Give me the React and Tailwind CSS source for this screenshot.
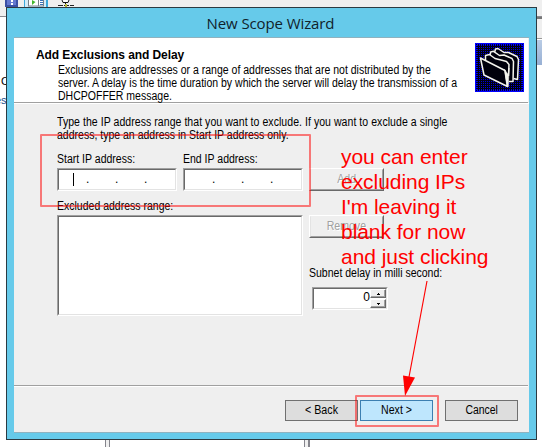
import React from "react";

function FolderIcon() {
  return (
    <svg width="49" height="49" viewBox="0 0 49 49" className="block shrink-0">
      <defs>
        <pattern id="dots" width="2" height="2" patternUnits="userSpaceOnUse">
          <rect width="2" height="2" fill="#000010" />
          <rect width="1" height="1" fill="#0000d8" />
        </pattern>
        <pattern id="edge" width="2" height="2" patternUnits="userSpaceOnUse">
          <rect width="2" height="2" fill="#0000ff" />
          <rect x="1" y="1" width="1" height="1" fill="#000030" />
        </pattern>
      </defs>
      <rect width="49" height="49" fill="url(#edge)" />
      <rect x="2" y="2" width="45" height="45" fill="url(#dots)" />
      <g fill="#00000c" stroke="#f4f4ee" strokeWidth="1.500" strokeLinejoin="round">
        <path d="M19.500 9.500 L20.500 6 L23 5.500 L29 9.500 L33.500 9.500 L42 13.500 L43.500 16.500 L42.500 36.500 L38.500 35.500" />
        <path d="M15 12.500 L15.700 9 L18.500 8.300 L24.500 12.500 L29 12 L37 15.500 L38.500 18.500 L38 38.500 L34 38.500" />
        <path d="M10.500 17 L10.500 12.500 L14.500 11.500 L20 15.500 L26 17 L31.500 18.500 L34 21.500 L33.500 33" />
        <path d="M5.500 15 L30 27.500 L32.500 43.500 L9 32 Z" />
      </g>
      <path d="M29.500 26.500 L33.500 32 L34 25 L33.300 43.500 H32 Z" fill="#f4f4ee" stroke="#f4f4ee" strokeWidth=".6" />
    </svg>
  );
}

const sunken =
  "border border-t-[#a0a0a0] border-l-[#a0a0a0] border-r-white border-b-white";
const sunkenInner =
  "h-full w-full border border-t-[#696969] border-l-[#696969] border-r-[#e3e3e3] border-b-[#e3e3e3] bg-white";
const narrow = "origin-left scale-x-[.876]";

function IpField({ caret }) {
  return (
    <div className={`h-[23px] w-[120px] ${sunken}`}>
      <div className={`${sunkenInner} flex pl-[14px] pt-[2px]`}>
        <span className={caret ? "mt-px h-[13px] w-px bg-black" : "w-px"} />
        <span className="ml-[12px] w-[29px] leading-[15px]">.</span>
        <span className="w-[29px] leading-[15px]">.</span>
        <span className="leading-[15px]">.</span>
      </div>
    </div>
  );
}

function DisabledButton({ children }) {
  return (
    <div className="h-[23px] w-[75px] border border-t-white border-l-white border-r-[#696969] border-b-[#696969]">
      <div className="flex h-full w-full items-center justify-center border border-t-[#efefef] border-l-[#e3e3e3] border-r-[#a0a0a0] border-b-[#a0a0a0] text-[#a0a0a0] [text-shadow:1px_1px_0_#fff]">
        <span className="scale-x-[.88]">{children}</span>
      </div>
    </div>
  );
}

function SpinButton({ up }) {
  return (
    <div className="flex h-[9px] w-4 items-center justify-center border border-t-white border-l-white border-r-[#696969] border-b-[#696969] bg-[#efefef] shadow-[inset_-1px_-1px_0_#a0a0a0]">
      <svg width="3" height="2" viewBox="0 0 3 2" shapeRendering="crispEdges">
        <path d={up ? "M1 0h1v1h1v1h-3v-1h1z" : "M0 0h3v1h-1v1h-1v-1h-1z"} fill="#000" />
      </svg>
    </div>
  );
}

export default function App() {
  return (
    <div className="relative h-[447px] w-[542px] overflow-hidden bg-white font-['Liberation_Sans',sans-serif] text-[12px] leading-[13px] whitespace-nowrap text-black">
      <div className="flex h-[17px] border-b border-[#8a8a8f] bg-[#efefef]">
        <svg width="90" height="7" viewBox="0 0 90 7">
          <rect x="5" y="0" width="13" height="7" fill="#3c50a5" />
          <rect x="7" y="0" width="9" height="5" fill="#6478d0" />
          <rect x="11" y="0" width="2" height="2" fill="#fff" />
          <rect x="11" y="3" width="2" height="2" fill="#fff" />
          <rect x="24" y="0" width="24" height="7" fill="#3ba8dc" />
          <rect x="25" y="0" width="21" height="7" fill="#d5ebf7" />
          <rect x="28" y="0" width="16" height="6.500" fill="#777f88" />
          <rect x="29" y="0" width="9" height="5.500" fill="#fff" />
          <rect x="39" y="0" width="4" height="5.500" fill="#fff" />
          <path d="M32 0 L35.500 2 L32 5 Z" fill="#43b72b" />
          <path d="M40 .5h3M40 2.500h3M40 4.500h3" stroke="#3a72b8" />
          <path d="M62 0 L63 2.500 H68 L69 0 M65.500 3 V5" stroke="#111" fill="#fff" />
          <path d="M58 5.500 H74" stroke="#222" strokeDasharray="5 1" />
          <rect x="65" y="4" width="2" height="3" fill="#b8b838" />
        </svg>
      </div>
      <div className="flex justify-between">
        <div className="w-[6px] overflow-hidden pt-[57px] text-[11px]">
          <div className="pl-px leading-[15px]">C</div>
          <div className="-ml-[5px] mt-[4px] leading-[15px] text-[#1c4f8c]">es</div>
        </div>
        <div className="h-[52px] w-[6px]">
          <div className="h-[22px] border-t-2 border-b border-t-[#777] border-b-[#999] bg-[#efefef]" />
          <div className="mt-px h-[25px] bg-linear-to-b from-[#b9cce5] to-[#98b0d4]" />
        </div>
      </div>
      <div className="absolute top-[440px] left-[105px] h-[7px] w-[5px] border-x border-[#85858c] bg-[#efefef]" />
      <div className="absolute top-[440px] left-[304px] h-[7px] w-[6px] border-l border-r-2 border-[#85858c] bg-[#efefef]" />

      <div className="absolute top-[7px] left-[6px] flex h-[433px] w-[531px] flex-col border border-[#2b3a42] bg-[#66caea] px-[7px] pb-[6px]">
        <div className="flex h-[29px] items-center justify-center pr-[2px] font-['Open_Sans',sans-serif] text-[15px] leading-[20px] tracking-[-0.1px] text-[#10222a]">
          <span>New Scope Wizard</span>
        </div>
        <div className="flex grow flex-col border-y border-[#8fb2bf] bg-[#efefef]">
          <div className="mr-px flex h-[65px] justify-between border-b border-[#a0a0a0] bg-white pr-1">
            <div className="w-[450px] pt-[11px] pl-[22px]">
              <div className="text-[12px] font-bold tracking-[-0.08px]">Add Exclusions and Delay</div>
              <div className="mt-[2px] pl-[22px]">
                <div className={narrow}>
                  <div>Exclusions are addresses or a range of addresses that are not distributed by the</div>
                  <div>server. A delay is the time duration by which the server will delay the transmission of a</div>
                  <div>DHCPOFFER message.</div>
                </div>
              </div>
            </div>
            <div className="pt-[5px]"><FolderIcon /></div>
          </div>
          <div className="h-px shrink-0 bg-white" />

          <div className="flex h-[281px] shrink-0 flex-col pt-[12px] pl-[43px]">
            <div className={narrow}>
              <div className="tracking-[0.06px]">Type the IP address range that you want to exclude. If you want to exclude a single</div>
              <div>address, type an address in Start IP address only.</div>
            </div>
            <div className="mt-[11px] flex">
              <div className="w-[126px]"><div className={narrow}>Start IP address:</div></div>
              <div className={narrow}>End IP address:</div>
            </div>
            <div className="mt-[2px] flex">
              <IpField caret />
              <div className="ml-[6px]"><IpField /></div>
              <div className="ml-[6px]"><DisabledButton>Add</DisabledButton></div>
            </div>
            <div className={`mt-[9px] ${narrow}`}>Excluded address range:</div>
            <div className="mt-[2px] flex">
              <div className={`h-[101px] w-[246px] ${sunken}`}><div className={sunkenInner} /></div>
              <div className="ml-[6px]">
                <DisabledButton>Remove</DisabledButton>
                <div className={`mt-[29px] ${narrow}`}>Subnet delay in milli second:</div>
                <div className={`mt-[7px] ml-[3px] h-[23px] w-[76px] ${sunken}`}>
                  <div className={`${sunkenInner} flex justify-end`}>
                    <span className="pt-[2px]">0</span>
                    <div className="flex w-4 shrink-0 flex-col gap-px"><SpinButton up /><SpinButton /></div>
                  </div>
                </div>
              </div>
            </div>
          </div>
          <div className="mr-px h-[2px] shrink-0 border-t border-b border-t-[#a0a0a0] border-b-white" />
          <div className="flex pt-[13px] pl-[271px]">
            <button className="flex h-[21px] w-[73px] items-center justify-center border border-[#707070] bg-[#ddd] pb-px"><span className="scale-x-[.89]">&lt; Back</span></button>
            <button className="ml-[2px] flex h-[21px] w-[73px] items-center justify-center border border-[#3c7fb1] bg-[#bee6fd] pb-px"><span className="scale-x-[.88]">Next &gt;</span></button>
            <button className="ml-[12px] flex h-[21px] w-[73px] items-center justify-center border border-[#707070] bg-[#ddd] pb-px"><span className="scale-x-[.87]">Cancel</span></button>
          </div>
        </div>
      </div>

      <div className="absolute top-[134px] left-[40px] h-[73px] w-[271px] rounded-[1px] border-2 border-[#ff0000]/50" />
      <div className="absolute top-[395px] left-[355px] h-[32px] w-[84px] rounded-[1px] border-2 border-[#ff0000]/50" />
      <div className="absolute top-[144px] left-[341px] text-[21px] leading-[25px] tracking-[-0.05px] text-[#ff0000]">
        <div>you can enter</div>
        <div>excluding IPs</div>
        <div>I'm leaving it</div>
        <div>blank for now</div>
        <div>and just clicking</div>
      </div>
      <svg className="absolute top-[278px] left-[398px]" width="36" height="120" viewBox="398 278 36 120">
        <path d="M427 281 L409 377" stroke="#f00" strokeWidth="1.200" />
        <path d="M403 375.500 L415 377.500 L405 396 Z" fill="#f00" />
      </svg>
    </div>
  );
}
